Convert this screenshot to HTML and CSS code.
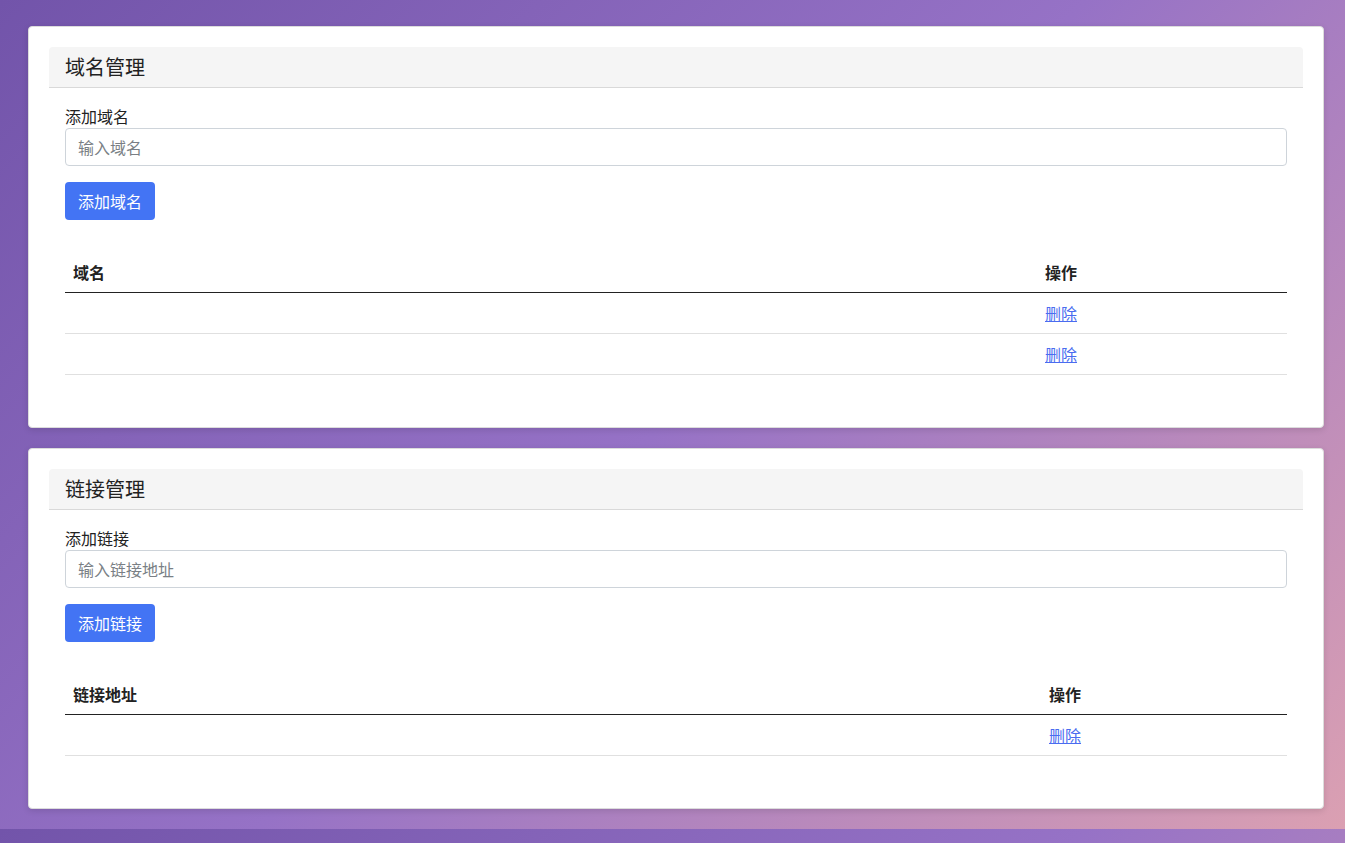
FILE: index.html
```html
<!DOCTYPE html>
<html lang="zh-CN">
<head>
<meta charset="utf-8">
<title>管理</title>
<link rel="stylesheet" href="styles.css">
</head>
<body>
  <div class="card">
    <div class="card-header">域名管理</div>
    <div class="card-body">
      <div class="form-group">
        <label class="form-label">添加域名</label>
        <input class="form-input" type="text" placeholder="输入域名">
      </div>
      <button class="btn">添加域名</button>
      <table class="data-table">
        <thead>
          <tr><th class="col-main">域名</th><th class="col-op col-op-domain">操作</th></tr>
        </thead>
        <tbody>
          <tr><td></td><td><a href="#" class="link">删除</a></td></tr>
          <tr><td></td><td><a href="#" class="link">删除</a></td></tr>
        </tbody>
      </table>
    </div>
  </div>

  <div class="card">
    <div class="card-header">链接管理</div>
    <div class="card-body">
      <div class="form-group">
        <label class="form-label">添加链接</label>
        <input class="form-input" type="text" placeholder="输入链接地址">
      </div>
      <button class="btn">添加链接</button>
      <table class="data-table">
        <thead>
          <tr><th class="col-main">链接地址</th><th class="col-op col-op-link">操作</th></tr>
        </thead>
        <tbody>
          <tr><td></td><td><a href="#" class="link">删除</a></td></tr>
        </tbody>
      </table>
    </div>
  </div>
</body>
</html>
```
FILE: styles.css
```css
html {
  margin: 0;
}
body {
  margin: 0;
  padding: 26px 21px 20px 28px;
  background: linear-gradient(135deg, #7254aa 0%, #9672c6 50%, #dba0b2 100%);
  font-family: "Noto Sans CJK SC", "Noto Sans", sans-serif;
  font-size: 16px;
  line-height: 24px;
  color: #212529;
  display: flex;
  flex-direction: column;
  gap: 20px;
}
.card {
  background: #fff;
  border: 1px solid #dcdcdc;
  border-radius: 4px;
  padding: 20px;
  box-shadow: 0 2px 6px rgba(0, 0, 0, 0.12);
}
.card-header {
  background: #f5f5f5;
  border-bottom: 1px solid #d9d9d9;
  border-radius: 4px 4px 0 0;
  padding: 0 16px;
  height: 40px;
  line-height: 40px;
  font-size: 20px;
  color: #222;
}
.card-body {
  padding: 16px;
}
.form-group {
  margin-bottom: 16px;
}
.form-label {
  display: block;
  font-size: 16px;
  line-height: 24px;
  color: #222;
}
.form-input {
  display: block;
  box-sizing: border-box;
  width: 100%;
  height: 38px;
  padding: 6px 12px;
  font-family: inherit;
  font-size: 16px;
  line-height: 24px;
  color: #212529;
  border: 1px solid #ced4da;
  border-radius: 4px;
  background: #fff;
  outline: none;
}
.form-input::placeholder {
  color: #7a7f85;
}
.btn {
  display: block;
  height: 38px;
  padding: 0 13px;
  font-family: inherit;
  font-size: 16px;
  line-height: 38px;
  color: #fff;
  background: #4374f4;
  border: none;
  border-radius: 4px;
}
.data-table {
  width: 100%;
  border-collapse: collapse;
  margin-top: 32px;
  margin-bottom: 16px;
}
.data-table th {
  text-align: left;
  font-weight: bold;
  padding: 8px;
  height: 24px;
  line-height: 24px;
  border-bottom: 1px solid #222;
  color: #222;
}
.data-table td {
  padding: 8px;
  height: 24px;
  line-height: 24px;
  border-bottom: 1px solid #e0e0e0;
}
.col-op-domain {
  width: 234px;
}
.col-op-link {
  width: 230px;
}
.link {
  display: block;
  width: max-content;
  height: 24px;
  line-height: 24px;
  color: #4a6cf0;
  text-decoration: underline;
  font-size: 16px;
}
```
